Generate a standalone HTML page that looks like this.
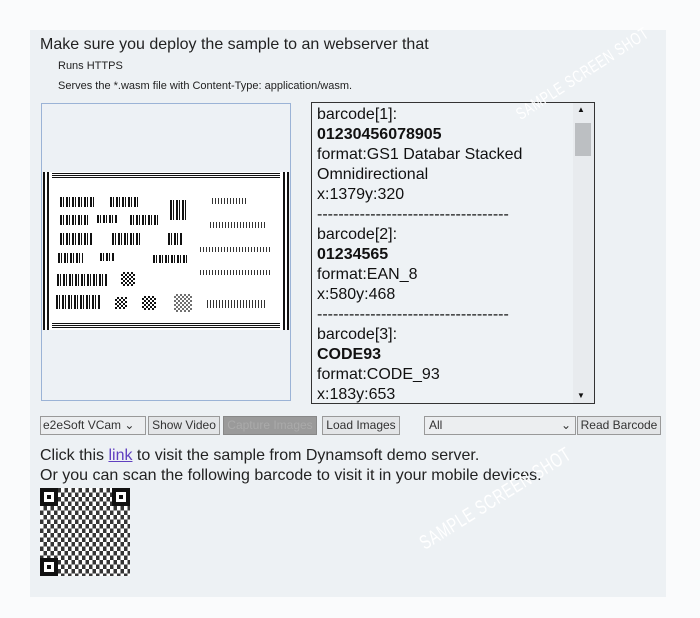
<!DOCTYPE html><html><head><style>
body{margin:0;width:700px;height:618px;background:#fafbfc;font-family:"Liberation Sans",sans-serif;position:relative;overflow:hidden}
.main{position:absolute;left:30px;top:30px;width:636px;height:567px;background:#edf1f4}
.a{position:absolute;white-space:nowrap;color:#222}
.ta{position:absolute;left:311px;top:102px;width:282px;height:300px;border:1px solid #333;background:#eef2f5;overflow:hidden;font-size:16px;line-height:20px;color:#111}
.ta div{padding-left:5px}
.sb{position:absolute;right:0;top:0;width:16px;height:300px;background:#e8ebee}
.btn{position:absolute;top:416px;height:17px;border:1px solid #999;background:#e3e5e7;font-size:12px;line-height:17px;text-align:center;color:#333}
.bars{position:absolute;background:repeating-linear-gradient(90deg,#111 0 2px,#fff 2px 3px,#111 3px 4px,#fff 4px 6px)}
.bars2{position:absolute;background:repeating-linear-gradient(90deg,#333 0 1px,#fff 1px 3px)}
.qr{position:absolute;background:repeating-conic-gradient(#111 0 25%,#fff 0 50%) 0 0/8px 8px}
.wm{position:absolute;color:#fff;white-space:nowrap;transform-origin:0 50%;letter-spacing:1px;font-family:"Liberation Sans Narrow","Liberation Sans",sans-serif}
</style></head><body>
<div class="main"></div>
<div class="a" style="left:40px;top:36px;font-size:16px">Make sure you deploy the sample to an webserver that</div>
<div class="a" style="left:58px;top:60px;font-size:11px">Runs HTTPS</div>
<div class="a" style="left:58px;top:80px;font-size:11px">Serves the *.wasm file with Content-Type: application/wasm.</div>
<div style="position:absolute;left:41px;top:103px;width:248px;height:296px;border:1px solid #9bb3d6;background:#edf1f5"></div>
<div style="position:absolute;left:43px;top:172px;width:246px;height:158px;background:#fff"></div>
<div style="position:absolute;left:43px;top:172px;width:6px;height:158px;background:repeating-linear-gradient(90deg,#111 0 2px,#fff 2px 4px)"></div>
<div style="position:absolute;left:283px;top:172px;width:6px;height:158px;background:repeating-linear-gradient(90deg,#111 0 2px,#fff 2px 4px)"></div>
<div style="position:absolute;left:52px;top:173px;width:228px;height:6px;background:repeating-linear-gradient(#111 0 1px,#fff 1px 2px)"></div>
<div style="position:absolute;left:52px;top:323px;width:228px;height:6px;background:repeating-linear-gradient(#111 0 1px,#fff 1px 2px)"></div>
<div class="bars" style="left:60px;top:197px;width:36px;height:10px"></div>
<div class="bars" style="left:110px;top:197px;width:30px;height:10px"></div>
<div class="bars" style="left:60px;top:215px;width:28px;height:10px"></div>
<div class="bars" style="left:97px;top:215px;width:20px;height:8px"></div>
<div class="bars" style="left:130px;top:215px;width:28px;height:10px"></div>
<div class="bars" style="left:170px;top:200px;width:16px;height:20px"></div>
<div class="bars" style="left:60px;top:233px;width:33px;height:12px"></div>
<div class="bars" style="left:112px;top:233px;width:30px;height:12px"></div>
<div class="bars" style="left:168px;top:233px;width:15px;height:12px"></div>
<div class="bars" style="left:58px;top:253px;width:25px;height:10px"></div>
<div class="bars" style="left:100px;top:253px;width:14px;height:8px"></div>
<div class="bars" style="left:153px;top:255px;width:35px;height:8px"></div>
<div class="bars" style="left:57px;top:274px;width:50px;height:12px"></div>
<div class="qr" style="left:121px;top:272px;width:14px;height:14px;background-size:4px 4px"></div>
<div class="bars" style="left:56px;top:295px;width:45px;height:14px"></div>
<div class="qr" style="left:115px;top:297px;width:12px;height:12px;background-size:4px 4px"></div>
<div class="qr" style="left:142px;top:296px;width:14px;height:14px;background-size:4px 4px"></div>
<div class="qr" style="left:174px;top:294px;width:18px;height:18px;background-size:4px 4px;opacity:.6"></div>
<div class="bars2" style="left:212px;top:198px;width:36px;height:6px"></div>
<div class="bars2" style="left:210px;top:222px;width:55px;height:6px"></div>
<div class="bars2" style="left:200px;top:247px;width:72px;height:5px"></div>
<div class="bars2" style="left:200px;top:270px;width:72px;height:5px"></div>
<div class="bars2" style="left:207px;top:300px;width:60px;height:8px"></div>
<div class="ta"><div style="padding-top:2px">barcode[1]:<br><b>01230456078905</b><br>format:GS1 Databar Stacked<br>Omnidirectional<br>x:1379y:320<br>------------------------------------<br>barcode[2]:<br><b>01234565</b><br>format:EAN_8<br>x:580y:468<br>------------------------------------<br>barcode[3]:<br><b>CODE93</b><br>format:CODE_93<br>x:183y:653</div>
<div class="sb"><div style="position:absolute;left:2px;top:20px;width:11px;height:33px;background:#bcbfc2"></div><div style="position:absolute;left:4px;top:3px;font-size:8px;line-height:8px;padding:0">▲</div><div style="position:absolute;left:4px;bottom:3px;font-size:8px;line-height:8px;padding:0">▼</div></div></div>
<div class="btn" style="left:40px;width:102px;text-align:left;padding-left:2px;background:#eceef0">e2eSoft VCam ⌄</div>
<div class="btn" style="left:148px;width:70px">Show Video</div>
<div class="btn" style="left:223px;width:92px;background:#9a9a9a;color:#aaa;border-color:#888">Capture Images</div>
<div class="btn" style="left:322px;width:76px">Load Images</div>
<div class="btn" style="left:424px;width:146px;text-align:left;padding-left:4px;background:#eceef0">All<span style="position:absolute;right:4px">⌄</span></div>
<div class="btn" style="left:577px;width:82px">Read Barcode</div>
<div class="a" style="left:40px;top:446px;font-size:16px;line-height:20px">Click this <span style="color:#6040c0;text-decoration:underline">link</span> to visit the sample from Dynamsoft demo server.<br>Or you can scan the following barcode to visit it in your mobile devices.</div>
<div style="position:absolute;left:40px;top:488px;width:90px;height:88px;background:#fff"></div>
<div class="qr" style="left:40px;top:488px;width:90px;height:88px;background:repeating-conic-gradient(#111 0 25%,#fff 0 50%) 0 0/7px 9px;opacity:.85"></div>
<div style="position:absolute;left:40px;top:488px;width:18px;height:18px;border:4px solid #111;background:#fff;box-sizing:border-box"><div style="margin:3px;width:4px;height:4px;background:#111"></div></div>
<div style="position:absolute;left:112px;top:488px;width:18px;height:18px;border:4px solid #111;background:#fff;box-sizing:border-box"><div style="margin:3px;width:4px;height:4px;background:#111"></div></div>
<div style="position:absolute;left:40px;top:558px;width:18px;height:18px;border:4px solid #111;background:#fff;box-sizing:border-box"><div style="margin:3px;width:4px;height:4px;background:#111"></div></div>
<div class="wm" style="left:518px;top:106px;font-size:17px;transform:rotate(-33deg) scaleX(.72)">SAMPLE SCREEN SHOT</div>
<div class="wm" style="left:422px;top:534px;font-size:20px;transform:rotate(-32deg) scaleX(.7)">SAMPLE SCREEN SHOT</div>
</body></html>
